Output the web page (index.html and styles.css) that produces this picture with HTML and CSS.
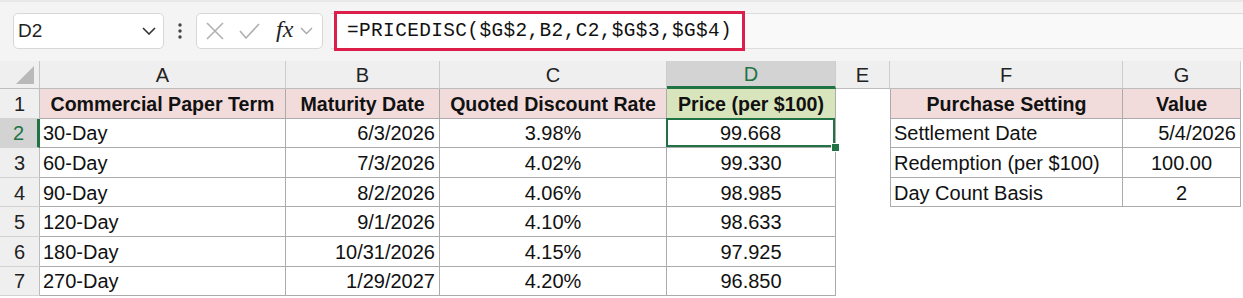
FILE: index.html
```html
<!DOCTYPE html>
<html lang="en">
<head>
  <meta charset="UTF-8">
  <title>PRICEDISC</title>
  <link rel="stylesheet" href="styles.css">
</head>
<body>
  <div class="toolbar">
    <div class="namebox">
      <span>D2</span>
      <svg class="chev" width="14" height="8" viewBox="0 0 14 8"><path d="M1 1l6 6 6-6" fill="none" stroke="#333" stroke-width="1.6"/></svg>
    </div>
    <div class="dots">
      <svg width="6" height="16" viewBox="0 0 6 16"><circle cx="3" cy="2" r="1.7" fill="#444"/><circle cx="3" cy="8" r="1.7" fill="#444"/><circle cx="3" cy="14" r="1.7" fill="#444"/></svg>
    </div>
    <div class="fxbox">
      <svg width="18" height="18" viewBox="0 0 18 18"><path d="M1 1l16 16M17 1L1 17" stroke="#b0b0b0" stroke-width="1.6"/></svg>
      <svg width="21" height="16" viewBox="0 0 21 16"><path d="M1 8l6 7L20 1" fill="none" stroke="#b0b0b0" stroke-width="1.6"/></svg>
      <span class="fx">fx</span>
      <svg width="13" height="8" viewBox="0 0 13 8"><path d="M1 1l5.5 5.5L12 1" fill="none" stroke="#a8a8a8" stroke-width="1.4"/></svg>
    </div>
    <div class="formula">
      <div class="highlight">=PRICEDISC($G$2,B2,C2,$G$3,$G$4)</div>
    </div>
  </div>

  <div class="sheet">
    <div class="corner"></div>
    <div class="colhead">A</div>
    <div class="colhead">B</div>
    <div class="colhead">C</div>
    <div class="colhead selected">D</div>
    <div class="colhead">E</div>
    <div class="colhead">F</div>
    <div class="colhead">G</div>

    <div class="rowhead">1</div>
    <div class="cell head">Commercial Paper Term</div>
    <div class="cell head">Maturity Date</div>
    <div class="cell head">Quoted Discount Rate</div>
    <div class="cell head green">Price (per $100)</div>
    <div class="blank"></div>
    <div class="cell head first">Purchase Setting</div>
    <div class="cell head">Value</div>

    <div class="rowhead selected">2</div>
    <div class="cell left">30-Day</div>
    <div class="cell right">6/3/2026</div>
    <div class="cell">3.98%</div>
    <div class="cell active">99.668<span class="handle"></span></div>
    <div class="blank"></div>
    <div class="cell left first">Settlement Date</div>
    <div class="cell right">5/4/2026</div>

    <div class="rowhead">3</div>
    <div class="cell left">60-Day</div>
    <div class="cell right">7/3/2026</div>
    <div class="cell">4.02%</div>
    <div class="cell">99.330</div>
    <div class="blank"></div>
    <div class="cell left first">Redemption (per $100)</div>
    <div class="cell">100.00</div>

    <div class="rowhead">4</div>
    <div class="cell left">90-Day</div>
    <div class="cell right">8/2/2026</div>
    <div class="cell">4.06%</div>
    <div class="cell">98.985</div>
    <div class="blank"></div>
    <div class="cell left first">Day Count Basis</div>
    <div class="cell">2</div>

    <div class="rowhead">5</div>
    <div class="cell left">120-Day</div>
    <div class="cell right">9/1/2026</div>
    <div class="cell">4.10%</div>
    <div class="cell">98.633</div>
    <div class="blank"></div>
    <div class="blank"></div>
    <div class="blank"></div>

    <div class="rowhead">6</div>
    <div class="cell left">180-Day</div>
    <div class="cell right">10/31/2026</div>
    <div class="cell">4.15%</div>
    <div class="cell">97.925</div>
    <div class="blank"></div>
    <div class="blank"></div>
    <div class="blank"></div>

    <div class="rowhead">7</div>
    <div class="cell left">270-Day</div>
    <div class="cell right">1/29/2027</div>
    <div class="cell">4.20%</div>
    <div class="cell">96.850</div>
    <div class="blank"></div>
    <div class="blank"></div>
    <div class="blank"></div>
  </div>
</body>
</html>
```

FILE: styles.css
```css
body {
  margin: 0;
  font-family: "Liberation Sans", Arial, sans-serif;
  color: #111;
  background: #fff;
  width: 1243px;
  height: 298px;
  overflow: hidden;
}
.toolbar {
  height: 61px;
  box-sizing: border-box;
  background: #f4f4f4;
  border-top: 2px solid #e8e8e8;
  padding: 11px 0 0 13px;
  display: flex;
  align-items: flex-start;
}
.namebox {
  width: 151px;
  height: 36px;
  box-sizing: border-box;
  background: #fff;
  border: 1px solid #d8d8d8;
  border-radius: 5px;
  display: flex;
  align-items: center;
  justify-content: space-between;
  padding: 0 7px 0 4px;
  font-size: 19px;
  color: #222;
}
.dots {
  width: 32px;
  height: 36px;
  display: flex;
  align-items: center;
  justify-content: center;
}
.fxbox {
  width: 127px;
  height: 36px;
  box-sizing: border-box;
  background: #fff;
  border: 1px solid #d8d8d8;
  border-radius: 5px;
  display: flex;
  align-items: center;
  padding: 0 4px 0 9px;
}
.fxbox svg:nth-child(2) {
  margin-left: 15px;
}
.fx {
  font-family: "Liberation Serif", serif;
  font-style: italic;
  font-size: 24px;
  color: #222;
  margin: -4px 7px 0 16px;
}
.formula {
  flex: 1;
  height: 36px;
  margin-left: 8px;
  box-sizing: border-box;
  border-top: 1px solid #dcdcdc;
  border-bottom: 1px solid #dcdcdc;
  background: #f9f9f9;
  display: flex;
}
.highlight {
  margin: -3px 0 0 3px;
  width: 411px;
  height: 40px;
  box-sizing: border-box;
  border: 3px solid #dc1e4a;
  background: #fff;
  font-family: "Liberation Mono", monospace;
  font-size: 19.4px;
  letter-spacing: 0.4px;
  color: #111;
  display: flex;
  align-items: center;
  padding-left: 10px;
}
.sheet {
  display: grid;
  grid-template-columns: 40px 246px 154px 227px 169px 54px 233px 118px;
  grid-template-rows: 28px repeat(7, 29.6px);
  font-size: 20px;
}
.corner {
  background: #efefef;
  border-right: 1px solid #c6c6c6;
  border-bottom: 1px solid #bdbdbd;
  position: relative;
}
.corner::after {
  content: "";
  position: absolute;
  right: 5px;
  bottom: 4px;
  border-left: 18px solid transparent;
  border-bottom: 18px solid #b9b9b9;
}
.colhead {
  background: #efefef;
  border-right: 1px solid #cdcdcd;
  border-bottom: 1px solid #bdbdbd;
  display: flex;
  align-items: center;
  justify-content: center;
  color: #222;
  padding-top: 2px;
}
.colhead.selected {
  background: #d3d3d3;
  color: #217346;
  border-bottom: 3px solid #217346;
}
.rowhead {
  background: #efefef;
  border-right: 1px solid #bdbdbd;
  border-bottom: 1px solid #d2d2d2;
  display: flex;
  align-items: center;
  justify-content: center;
  color: #222;
  padding-top: 2px;
}
.rowhead.selected {
  background: #d3d3d3;
  color: #217346;
  border-right: 3px solid #217346;
}
.cell {
  border-right: 1px solid #ababab;
  border-bottom: 1px solid #ababab;
  display: flex;
  align-items: center;
  justify-content: center;
  white-space: nowrap;
  background: #fff;
  padding-top: 2px;
}
.cell.head {
  font-weight: bold;
  font-size: 19.6px;
  background: #f2dcdb;
}
.cell.green {
  background: #d8e4bc;
}
.cell.left {
  justify-content: flex-start;
  padding-left: 3px;
}
.cell.right {
  justify-content: flex-end;
  padding-right: 4px;
}
.cell.first {
  border-left: 1px solid #ababab;
}
.cell.active {
  position: relative;
  box-shadow: inset 0 0 0 2px #217346;
  margin: -1px 0 0 -1px;
}
.handle {
  position: absolute;
  right: -5px;
  bottom: -5px;
  width: 7px;
  height: 7px;
  background: #217346;
  border: 1px solid #fff;
}
.blank {
  background: #fff;
}
```
